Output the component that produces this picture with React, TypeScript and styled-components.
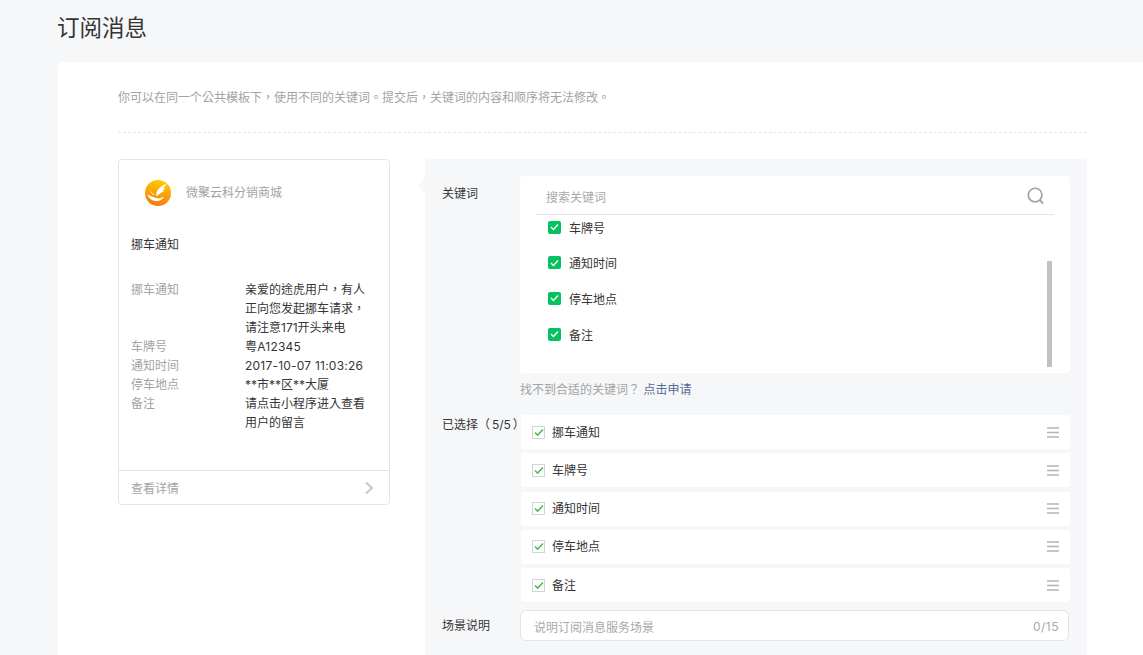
import React from "react";
import styled, { createGlobalStyle } from "styled-components";

const keywords = ["车牌号", "通知时间", "停车地点", "备注"];
const selected = ["挪车通知", "车牌号", "通知时间", "停车地点", "备注"];
const fields = [
    { label: "挪车通知", value: "亲爱的途虎用户，有人正向您发起挪车请求，请注意171开头来电" },
    { label: "车牌号", value: "粤A12345", numeric: true },
    { label: "通知时间", value: "2017-10-07 11:03:26", numeric: true },
    { label: "停车地点", value: "**市**区**大厦" },
    { label: "备注", value: "请点击小程序进入查看用户的留言" },
];

const App = () => {
    return (
        <Page>
            <GlobalStyle />
            <Title>订阅消息</Title>
            <Card>
                <Note>你可以在同一个公共模板下，使用不同的关键词。提交后，关键词的内容和顺序将无法修改。</Note>
                <Columns>
                    <Preview>
                        <Brand>
                            <Logo />
                            <BrandName>微聚云科分销商城</BrandName>
                        </Brand>
                        <PreviewTitle>挪车通知</PreviewTitle>
                        <Fields>
                            {fields.map(f => (
                                <React.Fragment key={f.label}>
                                    <FieldLabel>{f.label}</FieldLabel>
                                    <FieldValue $numeric={f.numeric}>{f.value}</FieldValue>
                                </React.Fragment>
                            ))}
                        </Fields>
                        <Details>
                            <span>查看详情</span>
                            <svg width="10" height="14" viewBox="0 0 10 14" fill="none">
                                <path d="M2 1.5 8 7l-6 5.5" stroke="#c4c4c4" strokeWidth="1.8" />
                            </svg>
                        </Details>
                    </Preview>
                    <Panel>
                        <FormRow>
                            <RowLabel>关键词</RowLabel>
                            <RowBody>
                                <PickerBox>
                                    <SearchRow>
                                        <SearchText>搜索关键词</SearchText>
                                        <svg width="18" height="18" viewBox="0 0 20 20" fill="none">
                                            <circle cx="9" cy="9" r="7.6" stroke="#a3a3a3" strokeWidth="1.9" />
                                            <path d="M14.2 14.4 17.8 18.4" stroke="#a3a3a3" strokeWidth="2.2" />
                                        </svg>
                                    </SearchRow>
                                    <KeywordList>
                                        {keywords.map(k => (
                                            <KeywordItem key={k}>
                                                <GreenCheck>
                                                    <svg width="9" height="8" viewBox="0 0 9 8" fill="none">
                                                        <path d="M1 4l2.4 2.4L8 1.6" stroke="#fff" strokeWidth="1.4" />
                                                    </svg>
                                                </GreenCheck>
                                                {k}
                                            </KeywordItem>
                                        ))}
                                    </KeywordList>
                                    <ScrollThumb />
                                </PickerBox>
                                <Hint>找不到合适的关键词？ <HintLink>点击申请</HintLink></Hint>
                            </RowBody>
                        </FormRow>
                        <SelectedRow>
                            <SelectedLabel>已选择（ 5/5 ）</SelectedLabel>
                            <SelectedList>
                                {selected.map(s => (
                                    <SelectedItem key={s}>
                                        <OutlineCheck>
                                            <svg width="10" height="9" viewBox="0 0 10 9" fill="none">
                                                <path d="M1 4.5l2.6 2.6L9 1.4" stroke="#4cbb4c" strokeWidth="1.5" />
                                            </svg>
                                        </OutlineCheck>
                                        <SelectedName>{s}</SelectedName>
                                        <svg width="12" height="11" viewBox="0 0 12 11" fill="none">
                                            <path d="M0 1h12M0 5.5h12M0 10h12" stroke="#b4b4b4" strokeWidth="1.4" />
                                        </svg>
                                    </SelectedItem>
                                ))}
                            </SelectedList>
                        </SelectedRow>
                        <FormRow>
                            <SceneLabel>场景说明</SceneLabel>
                            <SceneInput>
                                <span>说明订阅消息服务场景</span>
                                <Counter>0/15</Counter>
                            </SceneInput>
                        </FormRow>
                    </Panel>
                </Columns>
            </Card>
        </Page>
    );
};

const Logo = () => (
    <svg width="28" height="28" viewBox="0 0 28 28">
        <defs>
            <linearGradient id="logoFill" x1="0.6" y1="0" x2="0.4" y2="1">
                <stop offset="0" stopColor="#ffcb00" />
                <stop offset="1" stopColor="#f47a10" />
            </linearGradient>
        </defs>
        <circle cx="14" cy="14" r="13" fill="url(#logoFill)" />
        <path d="M3.5 15.5c1.5 4.5 5.5 7 10 6.5 3-.4 5.5-2 6.5-4.5-2 1.3-4.5 2.2-7 1.800-2.500-.4-5-1.800-9.500-3.800z" fill="#fff" />
        <path d="M12.500 17.500c-1.200-5.500 3-10.500 11-13-2.500 2-3.500 3.500-4 5 1-.5 2-.8 3-1-2 1.500-3 2.500-3.800 3.800.6-.1 1.300-.1 2 0-3 1-5.800 2.600-8.200 5.200z" fill="#fff" />
        <path d="M6.500 10.500c.5 2.700 2 4.500 4.800 5.500-2.800.2-5-2-4.800-5.500z" fill="#fff" />
    </svg>
);

export default App;

const GlobalStyle = createGlobalStyle`
    html, body {
        margin: 0;
        height: 100%;
        overflow: hidden;
        background: #f6f7f9;
    }
    body {
        font-family: Inter, "Noto Sans CJK SC", "Noto Sans", sans-serif;
        font-size: 12px;
        color: #353535;
    }
`;

// the reference centres its full-width punctuation, as the TC cut does
const centredPunctuation = `font-family: Inter, "Noto Sans CJK TC", "Noto Sans", sans-serif;`;

const Page = styled.div`
    height: 655px;
    overflow: hidden;
    padding-left: 58px;
`;

const Title = styled.h1`
    margin: 0 0 0 -1px;
    height: 62px;
    font-size: 22.5px;
    line-height: 56px;
    font-weight: 400;
    color: #353535;
`;

const Card = styled.div`
    background: #fff;
    border-radius: 4px 0 0 0;
    padding: 0 56px 0 60px;
    min-height: 600px;
`;

const Note = styled.p`
    ${centredPunctuation}
    margin: 0;
    height: 71px;
    box-sizing: border-box;
    padding-top: 27px;
    line-height: 18px;
    color: #a3a3a3;
    border-bottom: 1px dashed #e6e6e6;
`;

const Columns = styled.div`
    display: flex;
    align-items: flex-start;
    gap: 35px;
    margin-top: 26px;
`;

const Preview = styled.div`
    box-sizing: border-box;
    flex: 0 0 272px;
    height: 346px;
    border: 1px solid #e4e4e4;
    border-radius: 4px;
    padding: 0 12px;
    display: flex;
    flex-direction: column;
`;

const Brand = styled.div`
    display: flex;
    align-items: center;
    height: 66px;
    padding-left: 13px;
    gap: 14px;
    flex: none;
`;

const BrandName = styled.span`
    color: #a3a3a3;
    margin-bottom: 4px;
`;

const PreviewTitle = styled.div`
    line-height: 18px;
    height: 38px;
    margin-top: 10px;
    color: #353535;
`;

const Fields = styled.div`
    display: grid;
    grid-template-columns: 114px 125px;
    margin-top: 6px;
    line-height: 19px;
    flex: 1;
    align-content: start;
`;

const FieldLabel = styled.div`
    color: #a3a3a3;
`;

const FieldValue = styled.div<{ $numeric?: boolean }>`
    ${centredPunctuation}
    color: #353535;
    letter-spacing: ${p => (p.$numeric ? "0.22px" : "0")};
`;

const Details = styled.div`
    flex: none;
    height: 33px;
    margin: 0 -12px;
    padding: 0 15px 0 12px;
    border-top: 1px solid #e4e4e4;
    display: flex;
    align-items: center;
    justify-content: space-between;
    color: #a3a3a3;

    span {
        margin-bottom: 1px;
    }
`;

const Panel = styled.div`
    position: relative;
    flex: 1;
    background: #f6f7f9;
    border-radius: 4px;
    padding: 17px 17px 40px;
    display: flex;
    flex-direction: column;
    gap: 8px;

    &::before {
        content: "";
        position: absolute;
        left: -6px;
        top: 19px;
        border-style: solid;
        border-width: 8px 6px 8px 0;
        border-color: transparent #f6f7f9 transparent transparent;
    }
`;

const FormRow = styled.div`
    display: flex;
    align-items: flex-start;
`;

const SelectedRow = styled(FormRow)`
    margin-top: 8px;
`;

const RowLabel = styled.div`
    flex: 0 0 78px;
    line-height: 18px;
    padding-top: 9px;
`;

const SelectedLabel = styled(RowLabel)`
    ${centredPunctuation}
    flex-basis: 79px;
    min-width: 0;
    white-space: nowrap;
    word-spacing: -1.5px;
    padding-top: 1px;
`;

const SceneLabel = styled(RowLabel)`
    padding-top: 7px;
`;

const RowBody = styled.div`
    flex: 1;
`;

const PickerBox = styled.div`
    position: relative;
    height: 197px;
    background: #fff;
    border-radius: 4px;
    padding: 0 16px;
    overflow: hidden;
`;

const SearchRow = styled.div`
    height: 39px;
    box-sizing: border-box;
    padding: 1px 9px 0 10px;
    border-bottom: 1px solid #e4e4e4;
    display: flex;
    align-items: center;
    justify-content: space-between;
`;

const SearchText = styled.span`
    color: #a9a9a9;
    padding-top: 2px;
`;

const KeywordList = styled.div`
    height: 158px;
    overflow: hidden;
    padding-left: 12px;
`;

const KeywordItem = styled.div`
    height: 35.6px;
    display: flex;
    align-items: center;
    gap: 8px;
    color: #353535;

    &:first-child {
        margin-top: -5.5px;
    }
`;

const GreenCheck = styled.span`
    flex: none;
    width: 13px;
    height: 13px;
    background: #07c160;
    border-radius: 2px;
    display: flex;
    align-items: center;
    justify-content: center;
`;

const ScrollThumb = styled.div`
    position: absolute;
    right: 18px;
    top: 85px;
    width: 5px;
    height: 106px;
    background: #c1c1c1;
`;

const Hint = styled.div`
    ${centredPunctuation}
    margin-top: 8px;
    line-height: 18px;
    color: #a3a3a3;
`;

const HintLink = styled.a`
    color: #576b95;
`;

const SelectedList = styled.div`
    flex: 1;
    display: flex;
    flex-direction: column;
    gap: 4.25px;
`;

const SelectedItem = styled.div`
    height: 34px;
    background: #fff;
    border-radius: 3px;
    padding: 0 11px;
    display: flex;
    align-items: center;
    gap: 7px;
`;

const OutlineCheck = styled.span`
    flex: none;
    box-sizing: border-box;
    width: 13px;
    height: 13px;
    border: 1px solid #d4d4d4;
    display: flex;
    align-items: center;
    justify-content: center;
    background: #fff;
`;

const SelectedName = styled.span`
    flex: 1;
    color: #353535;
    margin-bottom: 2px;
`;

const SceneInput = styled.div`
    box-sizing: border-box;
    flex: 0 0 549px;
    height: 31px;
    background: #fff;
    border: 1px solid #e4e4e4;
    border-radius: 6px;
    padding: 2px 9px 0 13px;
    display: flex;
    align-items: center;
    justify-content: space-between;
    color: #a9a9a9;
`;

const Counter = styled.span`
    letter-spacing: 0.5px;
`;
